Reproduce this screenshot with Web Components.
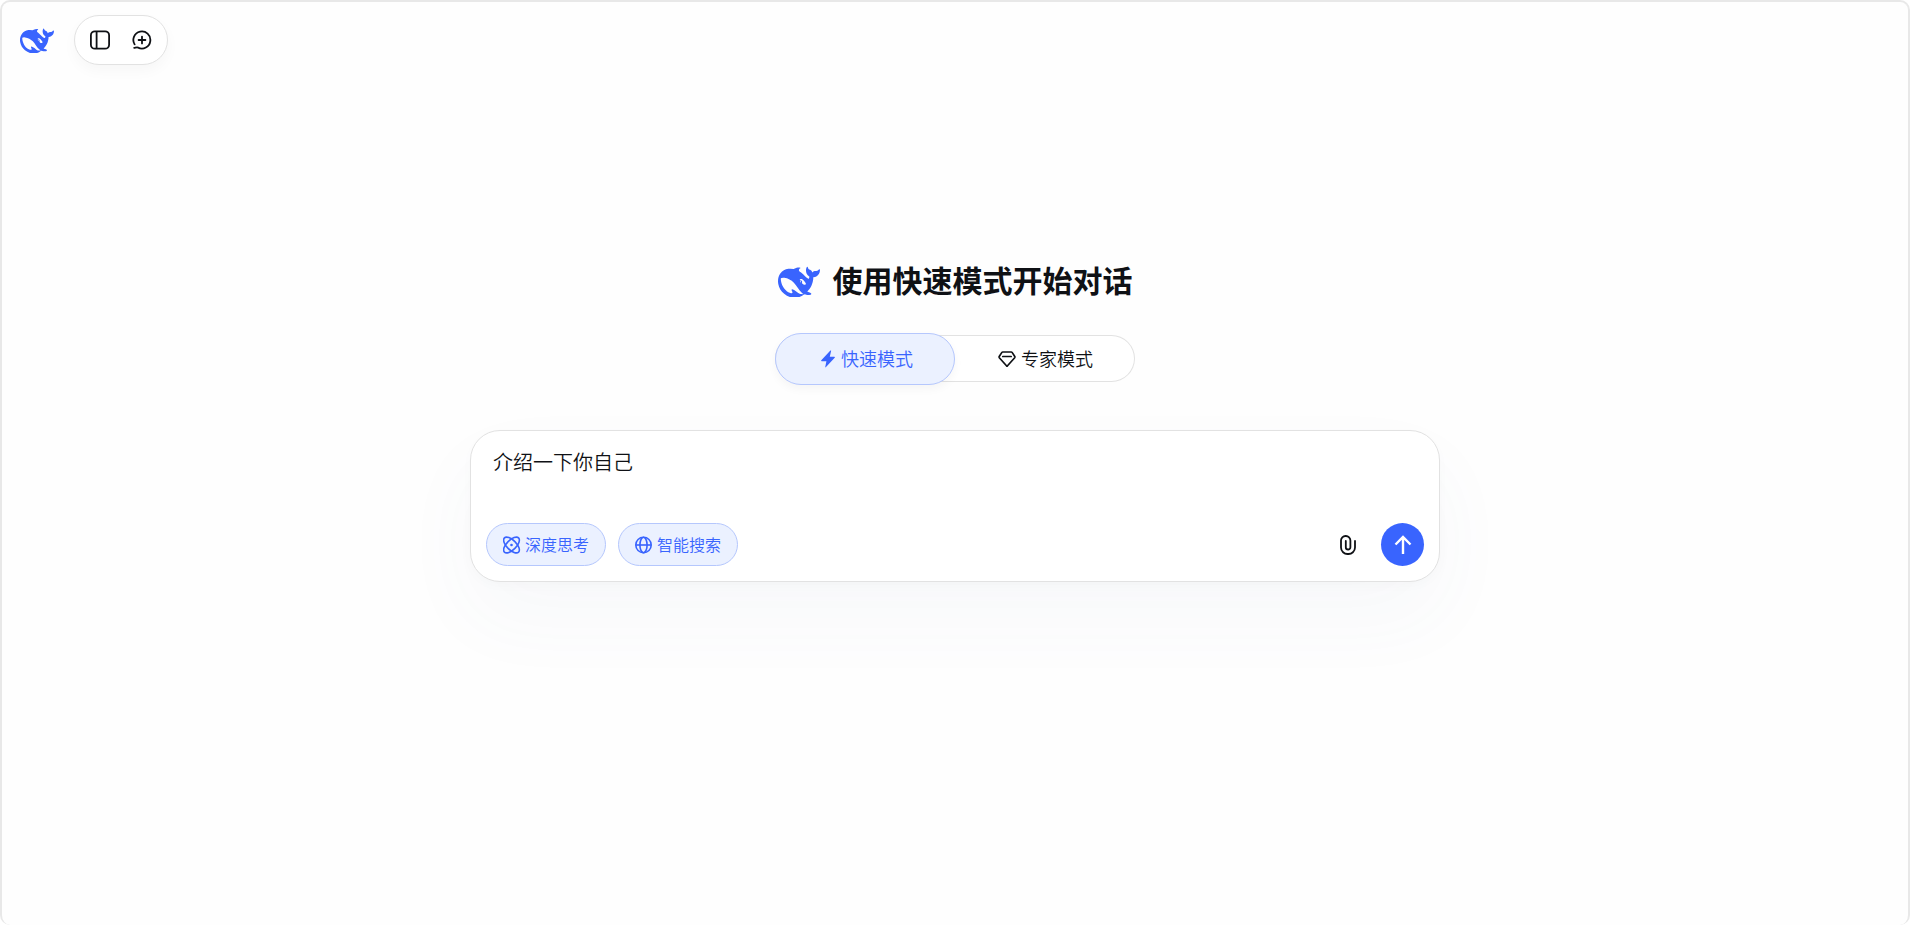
<!DOCTYPE html>
<html lang="zh-CN">
<head>
<meta charset="UTF-8">
<meta name="viewport" content="width=device-width, initial-scale=1">
<title>DeepSeek</title>
<style>
    :root {
        --blue: #3964fe;
        --blue-bg: #ebf1ff;
        --blue-line: #b5c7fd;
        --line: #e2e2e2;
        --ink: #0f1115;
    }
    html, body {
        height: 100%;
        margin: 0;
    }
    body {
        overflow: hidden;
        color: var(--ink);
        font-family: "Noto Sans CJK SC", "Noto Sans", sans-serif;
        font-weight: 350;
    }
</style>
</head>
<body>
<chat-app>
    <tool-bar slot="top"></tool-bar>
    <page-title>使用快速模式开始对话</page-title>
    <mode-switch></mode-switch>
    <chat-box text="介绍一下你自己">
        <chip-button icon="think">深度思考</chip-button>
        <chip-button icon="globe">智能搜索</chip-button>
    </chat-box>
</chat-app>

<script>
const icons = {
    sidebar: `<svg viewBox="0 0 20 20" width="20" height="20" fill="none" stroke="currentColor" stroke-width="1.8">
        <rect x="0.9" y="1.3" width="18.2" height="17.4" rx="4"/><path d="M6.6 1.5v17"/></svg>`,
    newChat: `<svg viewBox="0 0 20 20" width="20" height="20" fill="none" stroke="currentColor" stroke-width="1.8" stroke-linecap="round" stroke-linejoin="round">
        <path d="M2.6 14.4A8.5 8.5 0 1 1 6.1 17.6C4.9 17.1 3.9 17.6 2.2 17.9"/><path d="M10 6.6v6.8M6.6 10h6.8"/></svg>`,
    bolt: `<svg viewBox="-3 0 18 18" width="18" height="18" fill="currentColor">
        <path d="M10.4.6 1.3 10.3c-.4.5-.2 1 .4 1h4.7l-1.1 5.5c-.1.6.3.8.7.3l8.7-9.4c.4-.5.2-1-.4-1H9.8l1.3-5.7c.1-.6-.3-.8-.7-.4z"/></svg>`,
    gem: `<svg viewBox="-1 0 18 18" width="18" height="18" fill="none" stroke="currentColor" stroke-width="1.7" stroke-linejoin="round" stroke-linecap="round" overflow="visible">
        <path d="M4.7 2h8.6q.5 0 .8.4L16.8 6.5q.4.6-.1 1.2L9.5 15.8q-.5.5-1 0L1.3 7.7q-.5-.6-.1-1.2L3.9 2.4q.3-.4.8-.4z"/><path d="M4.8 6.5h8.4"/></svg>`,
    think: `<svg viewBox="0 0 18 18" width="18" height="18" fill="none" stroke="currentColor" stroke-width="1.6">
        <ellipse cx="8.5" cy="9" rx="10" ry="4.8" transform="rotate(45 8.5 9)"/><ellipse cx="8.5" cy="9" rx="10" ry="4.8" transform="rotate(-45 8.5 9)"/>
        <circle cx="8.5" cy="9" r="1.3" fill="currentColor" stroke="none"/></svg>`,
    globe: `<svg viewBox="0 0 18 18" width="18" height="18" fill="none" stroke="currentColor" stroke-width="1.6">
        <circle cx="8.5" cy="9" r="7.7"/><ellipse cx="8.5" cy="9" rx="3.6" ry="7.7"/><path d="M.8 9h15.4"/></svg>`,
    clip: `<svg viewBox="0 0 18 20" width="18" height="20" fill="none" stroke="currentColor" stroke-width="1.8" stroke-linecap="round">
        <path d="M16 6v6.5a6.5 6.5 0 0 1-7 6.5 6.5 6.5 0 0 1-7-6.5V5.7A4.5 4.5 0 0 1 6.7 1a4.5 4.5 0 0 1 4.7 4.7v6.5a2.3 2.3 0 0 1-4.6 0V6"/></svg>`,
    arrow: `<svg viewBox="0 0 18 20" width="18" height="20" fill="none" stroke="currentColor" stroke-width="2.4">
        <path d="M9 19V2M1.5 9.5 9 2l7.5 7.5"/></svg>`,
};

class WhaleLogo extends HTMLElement {
    constructor() {
        super();
        this.attachShadow({ mode: 'open' });
        this.shadowRoot.innerHTML = `
            <style>
                :host {
                    display: block;
                    flex: none;
                    width: 34px;
                    color: var(--blue);
                }
                svg {
                    display: block;
                    width: 100%;
                }
            </style>
            <svg viewBox="0 2 24 18.7" fill="currentColor" aria-hidden="true"><path d="M23.748 4.482c-.254-.124-.364.113-.512.234-.051.039-.094.09-.137.136-.372.397-.806.657-1.373.626-.829-.046-1.537.214-2.163.848-.133-.782-.575-1.248-1.247-1.548-.352-.156-.708-.311-.955-.65-.172-.241-.219-.51-.305-.774-.055-.16-.11-.323-.293-.35-.2-.031-.278.136-.356.276-.313.572-.434 1.202-.422 1.84.027 1.436.633 2.58 1.838 3.393.137.093.172.187.129.323-.082.28-.18.552-.266.833-.055.179-.137.217-.329.14a5.526 5.526 0 0 1-1.736-1.18c-.857-.828-1.631-1.742-2.597-2.458a11.365 11.365 0 0 0-.689-.471c-.985-.957.13-1.743.388-1.836.27-.098.093-.432-.779-.428-.872.004-1.67.295-2.687.684a3.055 3.055 0 0 1-.465.137 9.597 9.597 0 0 0-2.883-.102c-1.885.21-3.39 1.102-4.497 2.623C.082 8.606-.231 10.684.152 12.85c.403 2.284 1.569 4.175 3.36 5.653 1.858 1.533 3.997 2.284 6.438 2.14 1.482-.085 3.133-.284 4.994-1.86.47.234.962.327 1.78.397.63.059 1.236-.03 1.705-.128.735-.156.684-.837.419-.961-2.155-1.004-1.682-.595-2.113-.926 1.096-1.296 2.746-2.642 3.392-7.003.05-.347.007-.565 0-.845-.004-.17.035-.237.23-.256a4.173 4.173 0 0 0 1.545-.475c1.396-.763 1.96-2.015 2.093-3.517.02-.23-.004-.467-.247-.588zM11.581 18c-2.089-1.642-3.102-2.183-3.52-2.16-.392.024-.321.471-.235.763.09.288.207.486.371.739.114.167.192.416-.113.603-.673.416-1.842-.14-1.897-.167-1.361-.802-2.5-1.86-3.301-3.307-.774-1.393-1.224-2.887-1.298-4.482-.02-.386.093-.522.477-.592a4.696 4.696 0 0 1 1.529-.039c2.132.312 3.946 1.265 5.468 2.774.868.86 1.525 1.887 2.202 2.891.72 1.066 1.494 2.082 2.48 2.914.348.292.625.514.891.677-.802.09-2.14.11-3.054-.614zm1-6.44a.306.306 0 0 1 .415-.287.302.302 0 0 1 .2.288.306.306 0 0 1-.31.307.303.303 0 0 1-.304-.308zm3.11 1.596c-.2.081-.399.151-.59.16a1.245 1.245 0 0 1-.798-.254c-.274-.23-.47-.358-.552-.758a1.73 1.73 0 0 1 .016-.588c.07-.327-.008-.537-.239-.727-.187-.156-.426-.199-.688-.199a.559.559 0 0 1-.254-.078c-.11-.054-.2-.19-.114-.358.028-.054.16-.186.192-.21.356-.202.767-.136 1.146.016.352.144.618.408 1.001.782.391.451.462.576.685.914.176.265.336.537.445.848.067.195-.019.354-.25.452z"/></svg>
        `;
    }
}

class ChatApp extends HTMLElement {
    constructor() {
        super();
        this.attachShadow({ mode: 'open' });
        this.shadowRoot.innerHTML = `
            <style>
                :host {
                    display: flex;
                    flex-direction: column;
                    box-sizing: border-box;
                    height: 100%;
                    border: 2px solid #e8e8e8;
                    border-bottom: none;
                    border-radius: 10px;
                    background: #fefefe;
                }
                main {
                    flex: 1;
                    display: flex;
                    flex-direction: column;
                    align-items: center;
                    justify-content: center;
                    padding: 0 20px 162px;
                }
            </style>
            <slot name="top"></slot>
            <main><slot></slot></main>
        `;
    }
}

class ToolBar extends HTMLElement {
    constructor() {
        super();
        this.attachShadow({ mode: 'open' });
        this.shadowRoot.innerHTML = `
            <style>
                :host {
                    display: flex;
                    align-items: center;
                    gap: 20px;
                    padding: 13px 18px;
                }
                nav {
                    display: flex;
                    align-items: center;
                    gap: 2px;
                    padding: 3px 5px;
                    border: 1px solid var(--line);
                    border-radius: 25px;
                    background: #fff;
                    box-shadow: 0 6px 14px rgba(0, 0, 0, 0.03);
                }
                button {
                    display: grid;
                    place-items: center;
                    width: 40px;
                    height: 42px;
                    padding: 0;
                    border: none;
                    border-radius: 50%;
                    background: none;
                    color: inherit;
                    cursor: pointer;
                }
                button:hover {
                    background: #f3f4f6;
                }
            </style>
            <whale-logo></whale-logo>
            <nav>
                <button type="button" aria-label="打开边栏">${icons.sidebar}</button>
                <button type="button" aria-label="开启新对话">${icons.newChat}</button>
            </nav>
        `;
    }
}

class PageTitle extends HTMLElement {
    constructor() {
        super();
        this.attachShadow({ mode: 'open' });
        this.shadowRoot.innerHTML = `
            <style>
                :host {
                    display: flex;
                    align-items: center;
                    gap: 13px;
                }
                whale-logo {
                    width: 42px;
                }
                h1 {
                    margin: 0;
                    padding-bottom: 4px;
                    font-size: 30px;
                    line-height: 40px;
                    font-weight: 700;
                }
            </style>
            <whale-logo></whale-logo>
            <h1><slot></slot></h1>
        `;
    }
}

class ModeSwitch extends HTMLElement {
    constructor() {
        super();
        this.attachShadow({ mode: 'open' });
        this.shadowRoot.innerHTML = `
            <style>
                :host {
                    display: flex;
                    align-items: center;
                    box-sizing: border-box;
                    width: 360px;
                    max-width: 100%;
                    height: 47px;
                    margin: 32px 0 48px;
                    border-radius: 24px;
                    background: #fff;
                    box-shadow: inset 0 0 0 1px var(--line);
                }
                button {
                    flex: 1;
                    display: flex;
                    align-items: center;
                    justify-content: center;
                    gap: 6px;
                    height: 52px;
                    margin: -3px 0;
                    padding: 0;
                    border: 1px solid transparent;
                    border-radius: 26px;
                    background: none;
                    color: inherit;
                    font: inherit;
                    font-size: 18px;
                    cursor: pointer;
                }
                button[aria-pressed="true"] {
                    border-color: var(--blue-line);
                    background: var(--blue-bg);
                    color: var(--blue);
                    box-shadow: 0 4px 10px rgba(0, 0, 0, 0.04);
                }
                span {
                    padding-bottom: 2px;
                }
            </style>
            <button type="button" aria-pressed="true">${icons.bolt}<span>快速模式</span></button>
            <button type="button" aria-pressed="false">${icons.gem}<span>专家模式</span></button>
        `;
    }

    connectedCallback() {
        const buttons = this.shadowRoot.querySelectorAll('button');
        buttons.forEach(button => {
            button.addEventListener('click', () => {
                buttons.forEach(other => other.setAttribute('aria-pressed', other === button));
            });
        });
    }
}

class ChipButton extends HTMLElement {
    constructor() {
        super();
        this.attachShadow({ mode: 'open' });
        this.shadowRoot.innerHTML = `
            <style>
                :host {
                    display: block;
                }
                button {
                    display: flex;
                    align-items: center;
                    gap: 4px;
                    height: 43px;
                    padding: 0 16px;
                    border: 1px solid var(--line);
                    border-radius: 22px;
                    background: #fff;
                    color: inherit;
                    font: inherit;
                    font-size: 16px;
                    cursor: pointer;
                }
                button[aria-pressed="true"] {
                    border-color: var(--blue-line);
                    background: var(--blue-bg);
                    color: var(--blue);
                }
                span {
                    padding-bottom: 2px;
                }
            </style>
            <button type="button" aria-pressed="true">${icons[this.getAttribute('icon')]}<span><slot></slot></span></button>
        `;
    }

    connectedCallback() {
        const button = this.shadowRoot.querySelector('button');
        button.addEventListener('click', () => {
            button.setAttribute('aria-pressed', button.getAttribute('aria-pressed') !== 'true');
        });
    }
}

class ChatBox extends HTMLElement {
    constructor() {
        super();
        this.attachShadow({ mode: 'open' });
        this.shadowRoot.innerHTML = `
            <style>
                :host {
                    display: block;
                    box-sizing: border-box;
                    width: 100%;
                    max-width: 970px;
                    padding: 14px 15px 15px;
                    border: 1px solid var(--line);
                    border-radius: 30px;
                    background: #fff;
                    box-shadow: 0 36px 80px rgba(70, 90, 150, 0.04), 0 4px 12px rgba(0, 0, 0, 0.02);
                }
                textarea {
                    display: block;
                    box-sizing: border-box;
                    width: 100%;
                    height: 66px;
                    margin-bottom: 12px;
                    padding: 2px 7px;
                    border: none;
                    outline: none;
                    resize: none;
                    background: none;
                    color: inherit;
                    font: inherit;
                    font-size: 20px;
                    line-height: 30px;
                }
                .row {
                    display: flex;
                    align-items: center;
                    gap: 12px;
                }
                .attach, .send {
                    display: grid;
                    place-items: center;
                    width: 43px;
                    height: 43px;
                    padding: 0;
                    border: none;
                    border-radius: 50%;
                    background: none;
                    color: inherit;
                    cursor: pointer;
                }
                .attach {
                    margin-left: auto;
                }
                .send {
                    background: var(--blue);
                    color: #fff;
                }
            </style>
            <textarea aria-label="消息"></textarea>
            <div class="row">
                <slot></slot>
                <button class="attach" type="button" aria-label="上传附件">${icons.clip}</button>
                <button class="send" type="button" aria-label="发送">${icons.arrow}</button>
            </div>
        `;
    }

    connectedCallback() {
        this.shadowRoot.querySelector('textarea').value = this.getAttribute('text');
    }
}

customElements.define('whale-logo', WhaleLogo);
customElements.define('chat-app', ChatApp);
customElements.define('tool-bar', ToolBar);
customElements.define('page-title', PageTitle);
customElements.define('mode-switch', ModeSwitch);
customElements.define('chip-button', ChipButton);
customElements.define('chat-box', ChatBox);
</script>
</body>
</html>
